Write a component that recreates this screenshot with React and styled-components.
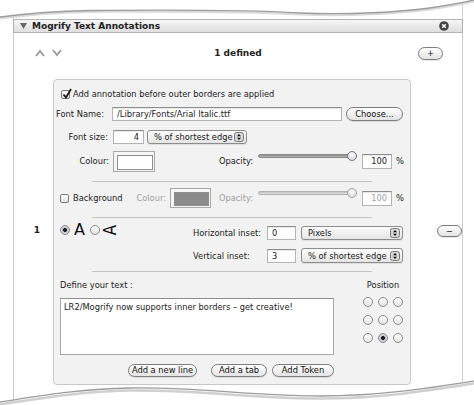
import React from "react";
import styled, { createGlobalStyle } from "styled-components";

const GlobalStyle = createGlobalStyle`
  html, body {
    margin: 0;
    padding: 0;
    background: #fff;
  }
  body {
    width: 474px;
    height: 405px;
    overflow: hidden;
    font-family: "DejaVu Sans", "Liberation Sans", sans-serif;
    font-size: 8.3px;
    color: #1e1e1e;
  }
  * {
    box-sizing: border-box;
  }
`;

const Page = styled.div`
  position: relative;
  width: 474px;
  height: 405px;
  overflow: hidden;
  padding-left: 13px;
`;

const Panel = styled.div`
  width: 450px;
  height: 405px;
  border-left: 1px solid #cfcfcf;
  border-right: 1px solid #cfcfcf;
  padding-top: 19px;
  background: #fff;
`;

const Header = styled.div`
  margin: 0 -1px;
  height: 14px;
  border: 1px solid #b2b2b2;
  background: linear-gradient(#f6f6f6, #dedede);
  display: flex;
  align-items: center;
  padding: 0 13px 0 6px;
`;

const Title = styled.span`
  flex: 1;
  margin-left: 5px;
  font-weight: bold;
  font-size: 9px;
  color: #222;
`;

const Toolbar = styled.div`
  margin-top: 13px;
  height: 14px;
  display: grid;
  grid-template-columns: 1fr auto 1fr;
  align-items: center;
  padding: 0 19px;
`;

const Arrows = styled.div`
  display: flex;
  gap: 7px;
  margin-left: 2px;
`;

const Count = styled.span`
  font-weight: bold;
  font-size: 9px;
  color: #222;
`;

const Pill = styled.button`
  justify-self: end;
  width: ${(p) => p.w}px;
  height: ${(p) => p.h || 13}px;
  margin: ${(p) => p.m || 0};
  padding: 0;
  border: 1px solid #7c7c7c;
  border-radius: 7px;
  background: linear-gradient(#ffffff, #e3e3e3);
  font-family: inherit;
  font-size: 8.3px;
  line-height: 1;
  color: #111;
  display: flex;
  align-items: center;
  justify-content: center;
  flex: none;
  box-shadow: 0 1px 0 rgba(0, 0, 0, 0.1);
`;

const Body = styled.div`
  margin-top: 19px;
  display: grid;
  grid-template-columns: 39px 358px 1fr;
  align-items: start;
`;

const IndexCol = styled.div`
  padding: 146px 0 0 7px;
  text-align: center;
  font-weight: bold;
  font-size: 9px;
  color: #222;
`;

const ActionCol = styled.div`
  padding: 146px 0 0 7px;
`;

const Annotation = styled.div`
  height: 306px;
  border: 1px solid #c8c8c8;
  border-radius: 4px;
  background: #f2f2f2;
  padding: 8px 0 0 2px;
`;

const Row = styled.div`
  display: flex;
  align-items: center;
  height: ${(p) => p.h}px;
  margin-top: ${(p) => p.mt || 0}px;
  padding-left: ${(p) => p.pl || 0}px;
`;

const Section = styled.div`
  display: flex;
  align-items: center;
  width: ${(p) => p.w}px;
  padding-left: ${(p) => p.pl || 0}px;
  flex: none;
  align-self: ${(p) => (p.top ? "flex-start" : "auto")};
  margin-top: ${(p) => (p.top ? "-3px" : "0")};
  height: ${(p) => (p.top ? "14px" : "auto")};
`;

const Label = styled.span`
  width: ${(p) => p.w}px;
  flex: none;
  text-align: ${(p) => p.align || "right"};
  margin-right: ${(p) => p.gap ?? 4}px;
  color: ${(p) => (p.dim ? "#a0a0a0" : "#222")};
  white-space: nowrap;
`;

const Text = styled.span`
  margin-left: ${(p) => p.ml || 0}px;
  white-space: nowrap;
  color: #222;
`;

const Field = styled.input`
  width: ${(p) => p.w}px;
  height: ${(p) => p.h || 14}px;
  flex: none;
  margin: 0;
  padding: 0 4px;
  background: #fff;
  border: 1px solid #b4b4b4;
  border-top-color: #8e8e8e;
  box-shadow: inset 0 1px 1px rgba(0, 0, 0, 0.1);
  font-family: inherit;
  font-size: 8.3px;
  color: ${(p) => (p.dim ? "#a0a0a0" : "#222")};
  text-align: ${(p) => (p.right ? "right" : "left")};
  outline: none;
`;

const Select = styled.div`
  width: ${(p) => p.w}px;
  height: ${(p) => p.h || 14}px;
  margin-left: ${(p) => p.ml || 0}px;
  flex: none;
  border: 1px solid #8c8c8c;
  border-radius: 3px;
  background: linear-gradient(#fdfdfd, #e4e4e4);
  box-shadow: 0 1px 0 rgba(0, 0, 0, 0.08);
  display: flex;
  align-items: center;
  justify-content: space-between;
  padding: 0 2px 0 6px;
  color: #222;
  white-space: nowrap;
`;

const Box = styled.span`
  position: relative;
  width: 9px;
  height: 9px;
  flex: none;
  border: 1px solid #7a7a7a;
  border-radius: 2px;
  background: linear-gradient(#fff, #e2e2e2);
  svg {
    position: absolute;
    left: 0;
    top: -3px;
  }
`;

const Radio = styled.span`
  width: 10px;
  height: 10px;
  flex: none;
  margin-left: ${(p) => p.ml || 0}px;
  border-radius: 50%;
  border: 1px solid #8a8a8a;
  background: ${(p) =>
    p.on
      ? "radial-gradient(circle, #1e1e1e 0 1.6px, #bfc5ce 2.3px, #eceef2)"
      : "linear-gradient(#fff, #e4e4e4)"};
`;

const Swatch = styled.div`
  width: ${(p) => p.w}px;
  height: ${(p) => p.h}px;
  flex: none;
  border: 1px solid #a9a9a9;
  background: #f6f6f6;
  padding: 3px;
  &::after {
    content: "";
    display: block;
    width: 100%;
    height: 100%;
    background: ${(p) => p.fill};
    border: 1px solid #8e8e8e;
  }
`;

const Slider = styled.div`
  position: relative;
  width: 99px;
  height: 10px;
  margin: 0 5px 10px 0;
  flex: none;
  display: flex;
  align-items: center;
`;

const Track = styled.div`
  width: 100%;
  height: 4px;
  border-radius: 2px;
  border: 1px solid ${(p) => (p.dim ? "#b4b4b4" : "#8a8a8a")};
  background: ${(p) =>
    p.dim ? "linear-gradient(#c4c4c4, #dedede)" : "linear-gradient(#8a8a8a, #bcbcbc)"};
`;

const Thumb = styled.div`
  position: absolute;
  right: 0;
  top: 0;
  width: 10px;
  height: 10px;
  border-radius: 50%;
  border: 1px solid ${(p) => (p.dim ? "#a5a5a5" : "#777")};
  background: radial-gradient(circle at 50% 35%, #fff, #c9ced6);
`;

const Percent = styled.span`
  margin-left: 4px;
  color: #222;
`;

const Separator = styled.div`
  margin: ${(p) => p.mt}px 0 0 36px;
  width: 280px;
  height: 1px;
  background: #c2c2c2;
`;

const BigA = styled.span`
  font-size: 16px;
  line-height: 14px;
  margin-left: 4px;
  color: #111;
`;

const TurnedA = styled.span`
  display: inline-block;
  font-size: 15px;
  line-height: 14px;
  margin-left: 5px;
  color: #111;
  transform: rotate(-90deg) scaleY(1.2);
`;

const Lower = styled.div`
  display: flex;
  margin-top: 8px;
`;

const TextCol = styled.div`
  width: 274px;
  margin-left: 4px;
  display: flex;
  flex-direction: column;
`;

const Caption = styled.div`
  height: 10px;
  line-height: 10px;
  color: #222;
  text-align: ${(p) => p.align || "left"};
`;

const TextArea = styled.textarea`
  margin-top: 8px;
  height: 57px;
  width: 100%;
  resize: none;
  padding: 3px 3px;
  border: 1px solid #a9a9a9;
  border-top-color: #8e8e8e;
  background: #fff;
  font-family: inherit;
  font-size: 8.3px;
  line-height: 11px;
  color: #222;
  outline: none;
`;

const ButtonRow = styled.div`
  margin-top: 9px;
  display: flex;
  justify-content: flex-end;
`;

const PositionCol = styled.div`
  width: 44px;
  margin-left: 27px;
`;

const PositionGrid = styled.div`
  margin-top: 7px;
  display: grid;
  grid-template-columns: repeat(3, 10px);
  column-gap: 5px;
  row-gap: 8px;
  justify-content: center;
`;

const Overlay = styled.svg`
  position: absolute;
  left: 0;
  pointer-events: none;
`;

const Stepper = () => (
  <svg width="10" height="10" viewBox="0 0 10 10">
    <rect x="0.5" y="0.5" width="9" height="9" rx="2" fill="#d6d6d6" stroke="#7a7a7a" />
    <path d="M3 4.2 L5 2 L7 4.2 Z M3 5.8 L5 8 L7 5.8 Z" fill="#111" />
  </svg>
);

const Check = () => (
  <svg width="10" height="11" viewBox="0 0 10 11">
    <path d="M1.5 6.5 L4 9.5 L9 1" fill="none" stroke="#1a1a1a" strokeWidth="1.8" />
  </svg>
);

const OpacityGroup = ({ dim }) => (
  <>
    <Label w={42} gap={5} dim={dim}>
      Opacity:
    </Label>
    <Slider>
      <Track dim={dim} />
      <Thumb dim={dim} />
    </Slider>
    <Field w={30} h={15} right dim={dim} readOnly defaultValue="100" />
    <Percent>%</Percent>
  </>
);

export default function App() {
  return (
    <>
      <GlobalStyle />
      <Page>
        <Panel>
          <Header>
            <svg width="7" height="6" viewBox="0 0 7 6">
              <path d="M0 0 H7 L3.5 6 Z" fill="#666" />
            </svg>
            <Title>Mogrify Text Annotations</Title>
            <svg width="10" height="10" viewBox="0 0 10 10">
              <circle cx="5" cy="5" r="4.8" fill="#444" />
              <path d="M3.2 3.2 L6.8 6.8 M6.8 3.2 L3.2 6.8" stroke="#fff" strokeWidth="1.4" />
            </svg>
          </Header>

          <Toolbar>
            <Arrows>
              <svg width="10" height="8" viewBox="0 0 10 8">
                <path d="M1 7 L5 2 L9 7" fill="none" stroke="#9a9a9a" strokeWidth="1.8" />
              </svg>
              <svg width="10" height="8" viewBox="0 0 10 8">
                <path d="M1 1 L5 6 L9 1" fill="none" stroke="#9a9a9a" strokeWidth="1.8" />
              </svg>
            </Arrows>
            <Count>1 defined</Count>
            <Pill w={25} h={13}>
              +
            </Pill>
          </Toolbar>

          <Body>
            <IndexCol>1</IndexCol>
            <Annotation>
              <Row h={12} pl={5}>
                <Box>
                  <Check />
                </Box>
                <Text ml={3}>Add annotation before outer borders are applied</Text>
              </Row>

              <Row h={14} mt={7}>
                <Label w={48} gap={8}>
                  Font Name:
                </Label>
                <Field w={230} readOnly defaultValue="/Library/Fonts/Arial Italic.ttf" />
                <Pill w={57} h={14} m="0 0 0 4px">
                  Choose...
                </Pill>
              </Row>

              <Row h={14} mt={9}>
                <Label w={52} gap={5}>
                  Font size:
                </Label>
                <Field w={31} right readOnly defaultValue="4" />
                <Select w={100} ml={3}>
                  % of shortest edge
                  <Stepper />
                </Select>
              </Row>

              <Row h={22} mt={6}>
                <Section w={155}>
                  <Label w={53}>Colour:</Label>
                  <Swatch w={42} h={21} fill="#fff" />
                </Section>
                <OpacityGroup />
              </Row>

              <Separator mt={9} />

              <Row h={20} mt={6}>
                <Section w={155}>
                  <Section w={76} pl={4}>
                    <Box />
                    <Text ml={4}>Background</Text>
                  </Section>
                  <Label w={34} dim>
                    Colour:
                  </Label>
                  <Swatch w={41} h={20} fill="#8b8b8b" />
                </Section>
                <OpacityGroup dim />
              </Row>

              <Separator mt={9} />

              <Row h={14} mt={8}>
                <Section w={137} pl={4} top>
                  <Radio on />
                  <BigA>A</BigA>
                  <Radio ml={5} />
                  <TurnedA>A</TurnedA>
                </Section>
                <Label w={74} align="left" gap={0}>
                  Horizontal inset:
                </Label>
                <Field w={29} readOnly defaultValue="0" />
                <Select w={102} ml={5}>
                  Pixels
                  <Stepper />
                </Select>
              </Row>

              <Row h={15} mt={8}>
                <Section w={137} />
                <Label w={74} align="left" gap={0}>
                  Vertical inset:
                </Label>
                <Field w={29} h={14} readOnly defaultValue="3" />
                <Select w={102} h={15} ml={5}>
                  % of shortest edge
                  <Stepper />
                </Select>
              </Row>

              <Separator mt={8} />

              <Lower>
                <TextCol>
                  <Caption>Define your text :</Caption>
                  <TextArea
                    readOnly
                    defaultValue="LR2/Mogrify now supports inner borders – get creative!"
                  />
                  <ButtonRow>
                    <Pill w={69} m="0 14px 0 0">
                      Add a new line
                    </Pill>
                    <Pill w={56} m="0 5px 0 0">
                      Add a tab
                    </Pill>
                    <Pill w={62}>Add Token</Pill>
                  </ButtonRow>
                </TextCol>
                <PositionCol>
                  <Caption align="center">Position</Caption>
                  <PositionGrid>
                    {Array.from({ length: 9 }, (_, i) => (
                      <Radio key={i} on={i === 7} />
                    ))}
                  </PositionGrid>
                </PositionCol>
              </Lower>
            </Annotation>
            <ActionCol>
              <Pill w={25} h={12}>
                −
              </Pill>
            </ActionCol>
          </Body>
        </Panel>

        <Overlay width="474" height="26" viewBox="0 0 474 26" style={{ top: 0 }}>
          <path
            d="M0 17 C30 13 55 11 90 10.5 C160 10 230 9 300 13 C350 15 400 12 430 8 C450 5 465 2 474 0 L474 0 L0 0 Z"
            fill="#fff"
          />
          <path
            d="M0 18.5 C30 14.5 55 12.5 90 12 C160 11.5 230 10.5 300 14.5 C350 16.5 400 13.5 430 9.5 C450 6.5 465 3.5 474 1.5"
            fill="none"
            stroke="#dadada"
            strokeWidth="2"
          />
          <path
            d="M0 17 C30 13 55 11 90 10.5 C160 10 230 9 300 13 C350 15 400 12 430 8 C450 5 465 2 474 0"
            fill="none"
            stroke="#9c9c9c"
            strokeWidth="1.3"
          />
        </Overlay>

        <Overlay width="474" height="30" viewBox="0 375 474 30" style={{ top: 375 }}>
          <path
            d="M0 402 C40 396 80 389 130 388 C200 387 250 396 320 396 C380 396 430 388 474 381 L474 405 L0 405 Z"
            fill="#fff"
          />
          <path
            d="M0 404.5 C40 398.5 80 391.5 130 390.5 C200 389.5 250 398.5 320 398.5 C380 398.5 430 390.5 474 383.5"
            fill="none"
            stroke="#d0d0d0"
            strokeWidth="2.5"
          />
          <path
            d="M0 402 C40 396 80 389 130 388 C200 387 250 396 320 396 C380 396 430 388 474 381"
            fill="none"
            stroke="#9c9c9c"
            strokeWidth="1.3"
          />
        </Overlay>
      </Page>
    </>
  );
}
